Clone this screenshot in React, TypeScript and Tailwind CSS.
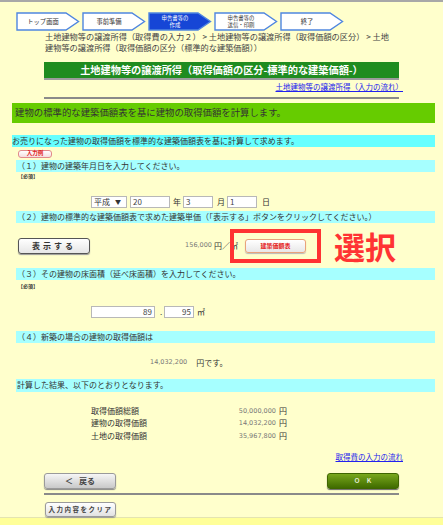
import React from "react";

const steps = [
    { lines: ["トップ画面"], active: false },
    { lines: ["事前準備"], active: false },
    { lines: ["申告書等の", "作成"], active: true },
    { lines: ["申告書等の", "送信・印刷"], active: false },
    { lines: ["終了"], active: false },
];

function Step({ lines, active }: { lines: string[]; active: boolean }) {
    return (
        <svg width="64" height="19" viewBox="0 0 64 19">
            <path
                d="M1 1 H50 L62.5 9.5 L50 18 H1 Z"
                fill={active ? "#1646d6" : "#ffffff"}
                stroke="#4f86e0"
                strokeWidth="1.4"
            />
            {lines.length === 1 ? (
                <text x="27" y="12" textAnchor="middle" fontSize="6.3" fill="#333" fontFamily="Noto Sans CJK JP, sans-serif">
                    {lines[0]}
                </text>
            ) : (
                <text textAnchor="middle" fontSize="5.4" fill={active ? "#ffffff" : "#333"} fontFamily="Noto Sans CJK JP, sans-serif">
                    <tspan x="27" y="8.3">{lines[0]}</tspan>
                    <tspan x="27" y="15.3">{lines[1]}</tspan>
                </text>
            )}
        </svg>
    );
}

function Band({ children, className = "" }: { children: React.ReactNode; className?: string }) {
    return <div className={`ml-[16px] w-[419px] h-[12px] bg-[#a6ffff] flex items-center px-[1px] text-[8px] leading-none whitespace-nowrap ${className}`}>{children}</div>;
}

function Box({ w, value, right = false }: { w: string; value: string; right?: boolean }) {
    return (
        <div className={`${w} h-[12px] bg-white border border-[#b8b8b8] flex items-center px-[2px] text-[8px] leading-none text-[#444] ${right ? "justify-end" : ""}`}>
            {value}
        </div>
    );
}

const results = [
    { label: "取得価額総額", value: "50,000,000" },
    { label: "建物の取得価額", value: "14,032,200" },
    { label: "土地の取得価額", value: "35,967,800" },
];

export default function App() {
    return (
        <div className="w-[443px] h-[525px] overflow-hidden bg-[#ffff99] font-['Noto_Sans_CJK_JP',sans-serif] text-[#333]">
            <div className="h-[518px] bg-[#ffffcc] border-t-2 border-[#a8a8a8] border-b border-b-[#e4e4b0] flex flex-col">
                {/* steps */}
                <div className="mt-[10px] ml-[16px] flex gap-[2px]">
                    {steps.map((s, i) => (
                        <Step key={i} lines={s.lines} active={s.active} />
                    ))}
                </div>

                {/* breadcrumb */}
                <div className="ml-[45px] h-[20px] text-[8.2px] leading-[10.5px] text-[#444] whitespace-nowrap">
                    土地建物等の譲渡所得（取得費の入力２） &gt; 土地建物等の譲渡所得（取得価額の区分） &gt; 土地
                    <br />
                    建物等の譲渡所得（取得価額の区分（標準的な建築価額））
                </div>

                {/* title */}
                <div className="mt-[11px] mx-[44px] h-[16px] bg-[#1f8c1f] shadow-[0_2px_0_#9c9c9c] flex items-center justify-center text-white font-bold text-[10.2px] leading-none whitespace-nowrap">
                    土地建物等の譲渡所得（取得価額の区分-標準的な建築価額-）
                </div>
                <div className="mt-[4px] h-[10px] mr-[40px] text-right text-[7.5px] leading-[10px] text-[#2222ee] underline">
                    土地建物等の譲渡所得（入力の流れ）
                </div>
                <div className="mt-[5px] mx-[44px] h-[2px] bg-[#8a8a8a]" />

                {/* intro */}
                <div className="mt-[4px] ml-[12px] w-[423px] h-[20px] bg-[#66cc00] flex items-center px-[3px] text-[9.4px] leading-none text-[#333] whitespace-nowrap">
                    建物の標準的な建築価額表を基に建物の取得価額を計算します。
                </div>
                <div className="mt-[12px] ml-[12px] w-[423px] h-[12px] bg-[#66ffff] flex items-center text-[8px] leading-none whitespace-nowrap">
                    お売りになった建物の取得価額を標準的な建築価額表を基に計算して求めます。
                </div>
                <div className="mt-[3px] ml-[18px] w-[34px] h-[8px] rounded-[3px] border border-[#e28a8a] bg-gradient-to-b from-white to-[#f4dede] flex items-center justify-center text-[5.5px] font-bold leading-none text-[#e02020]">
                    入力例
                </div>

                {/* (1) */}
                <Band className="mt-[2px]">（１）建物の建築年月日を入力してください。</Band>
                <div className="h-[8px] ml-[18px] text-[5px] font-bold leading-[8px] text-[#333]">【必須】</div>
                <div className="mt-[17px] h-[11px] ml-[91px] flex items-center text-[8px] leading-none">
                    <div className="w-[36px] h-[12px] bg-white border border-[#b8b8b8] flex items-center px-[2px] gap-[5px] text-[8px] text-[#333]">
                        <span>平成</span>
                        <span className="text-[6px]">▼</span>
                    </div>
                    <Box w="ml-[3px] w-[40px]" value="20" />
                    <span className="ml-[3px] w-[10px]">年</span>
                    <Box w="w-[30px]" value="3" />
                    <span className="ml-[4px] w-[10px]">月</span>
                    <Box w="w-[30px]" value="1" />
                    <span className="ml-[5px]">日</span>
                </div>

                {/* (2) */}
                <Band className="mt-[3px]">（２）建物の標準的な建築価額表で求めた建築単価（「表示する」ボタンをクリックしてください。）</Band>
                <div className="relative mt-[6px] h-[34px] flex items-center">
                    <div className="ml-[18px] w-[72px] h-[16px] rounded-[3px] border border-[#555] bg-gradient-to-b from-white to-[#e6e6e6] shadow-[0_1px_1px_#999] flex items-center justify-center text-[8px] font-bold tracking-[3px] leading-none text-[#333]">
                        表示する
                    </div>
                    <span className="ml-[92px] w-[30px] text-right font-['DejaVu_Sans',sans-serif] text-[6.5px] text-[#777]">156,000</span>
                    <span className="ml-[2px] w-[23px] text-[8px] leading-none whitespace-nowrap">円／㎡</span>
                    <div className="ml-[8px] w-[61px] h-[14px] rounded-[3px] border border-[#e9a37a] bg-gradient-to-b from-white to-[#e8e8e8] shadow-[0_1px_1px_#bbb] flex items-center justify-center text-[6px] font-bold leading-none text-[#e52222]">
                        建築価額表
                    </div>
                    {/* annotation overlay */}
                    <div className="absolute left-[230px] top-0 w-[91px] h-[34px] border-[4px] border-[#ff3333]" />
                    <div className="absolute left-[334px] top-[-2px] text-[31px] font-bold leading-[38px] text-[#ff3333]">選択</div>
                </div>

                {/* (3) */}
                <Band className="mt-[5px]">（３）その建物の床面積（延べ床面積）を入力してください。</Band>
                <div className="mt-[2px] h-[8px] ml-[18px] text-[5px] font-bold leading-[8px] text-[#333]">【必須】</div>
                <div className="mt-[16px] h-[12px] ml-[91px] flex items-center text-[8px] leading-none">
                    <Box w="w-[64px]" value="89" right />
                    <span className="ml-[3px] w-[6px] text-center">.</span>
                    <Box w="w-[30px]" value="95" right />
                    <span className="ml-[3px]">㎡</span>
                </div>

                {/* (4) */}
                <Band className="mt-[13px]">（４）新築の場合の建物の取得価額は</Band>
                <div className="mt-[14px] h-[12px] ml-[150px] flex items-center leading-none">
                    <span className="font-['DejaVu_Sans',sans-serif] text-[6.5px] text-[#777]">14,032,200</span>
                    <span className="ml-[9px] text-[8px]">円です。</span>
                </div>

                <Band className="mt-[10px] h-[13px]">計算した結果、以下のとおりとなります。</Band>
                <div className="mt-[13px] ml-[91px] flex flex-col">
                    {results.map((r) => (
                        <div key={r.label} className="h-[12.5px] flex items-center leading-none">
                            <span className="w-[120px] text-[8px]">{r.label}</span>
                            <span className="w-[65px] text-right font-['DejaVu_Sans',sans-serif] text-[6.5px] text-[#777]">{r.value}</span>
                            <span className="ml-[3px] text-[8px]">円</span>
                        </div>
                    ))}
                </div>

                <div className="mt-[10px] h-[10px] mr-[40px] text-right text-[7.5px] leading-[10px] text-[#2222ee] underline">
                    取得費の入力の流れ
                </div>

                {/* buttons */}
                <div className="mt-[11px] mx-[44px] h-[16px] flex justify-between">
                    <div className="w-[72px] h-[16px] rounded-[3px] border border-[#9a9a9a] bg-gradient-to-b from-[#f6f6f6] to-[#c9c9c9] shadow-[0_1px_1px_#888] flex items-center justify-center gap-[6px] text-[8px] font-bold leading-none text-[#444]">
                        <span>＜</span>
                        <span>戻る</span>
                    </div>
                    <div className="w-[72px] h-[16px] rounded-[3px] border border-[#3f6600] bg-gradient-to-b from-[#79a81c] to-[#3f6b00] shadow-[0_1px_1px_#666] flex items-center justify-center text-[6px] font-bold tracking-[6px] pl-[6px] leading-none text-[#e8f0d8]">
                        ＯＫ
                    </div>
                </div>
                <div className="mt-[4px] mx-[44px] h-[2px] bg-[#8a8a8a]" />
                <div className="mt-[7px] ml-[45px] w-[71px] h-[15px] rounded-[3px] border border-[#9a9a9a] bg-gradient-to-b from-white to-[#e2e2e2] shadow-[0_1px_1px_#999] flex items-center justify-center text-[6.5px] font-bold tracking-[1.5px] leading-none text-[#444] whitespace-nowrap">
                    入力内容をクリア
                </div>
            </div>
        </div>
    );
}
